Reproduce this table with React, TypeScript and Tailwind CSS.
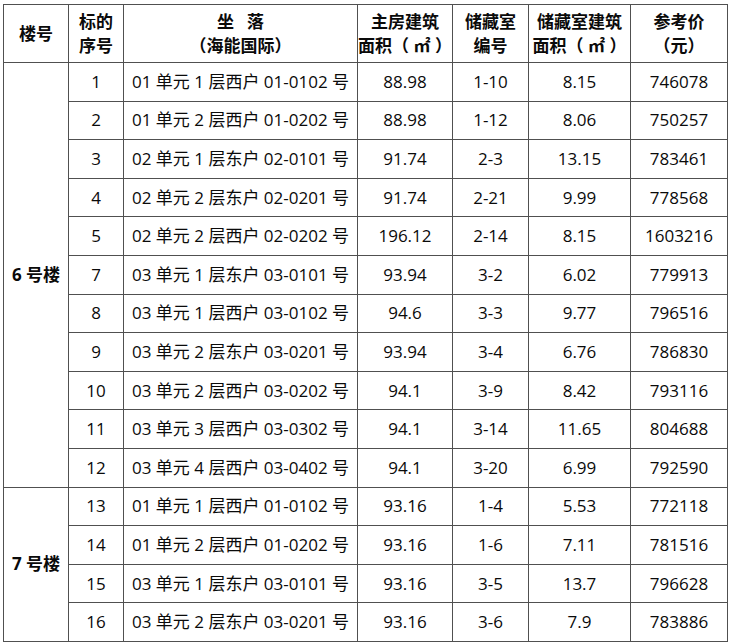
const rows6 = [
  ["1", "01 单元 1 层西户 01-0102 号", "88.98", "1-10", "8.15", "746078"],
  ["2", "01 单元 2 层西户 01-0202 号", "88.98", "1-12", "8.06", "750257"],
  ["3", "02 单元 1 层东户 02-0101 号", "91.74", "2-3", "13.15", "783461"],
  ["4", "02 单元 2 层东户 02-0201 号", "91.74", "2-21", "9.99", "778568"],
  ["5", "02 单元 2 层西户 02-0202 号", "196.12", "2-14", "8.15", "1603216"],
  ["7", "03 单元 1 层东户 03-0101 号", "93.94", "3-2", "6.02", "779913"],
  ["8", "03 单元 1 层西户 03-0102 号", "94.6", "3-3", "9.77", "796516"],
  ["9", "03 单元 2 层东户 03-0201 号", "93.94", "3-4", "6.76", "786830"],
  ["10", "03 单元 2 层西户 03-0202 号", "94.1", "3-9", "8.42", "793116"],
  ["11", "03 单元 3 层西户 03-0302 号", "94.1", "3-14", "11.65", "804688"],
  ["12", "03 单元 4 层西户 03-0402 号", "94.1", "3-20", "6.99", "792590"],
]

const rows7 = [
  ["13", "01 单元 1 层西户 01-0102 号", "93.16", "1-4", "5.53", "772118"],
  ["14", "01 单元 2 层西户 01-0202 号", "93.16", "1-6", "7.11", "781516"],
  ["15", "03 单元 1 层东户 03-0101 号", "93.16", "3-5", "13.7", "796628"],
  ["16", "03 单元 2 层东户 03-0201 号", "93.16", "3-6", "7.9", "783886"],
]

const cell = "border border-[#505050] text-center align-middle p-0"

function Group({ name, rows }: { name: string; rows: string[][] }) {
  return (
    <>
      {rows.map((r, i) => (
        <tr key={r[0]} className="h-[38.6px]">
          {i === 0 && (
            <td rowSpan={rows.length} className={`${cell} font-bold`}>
              {name}
            </td>
          )}
          <td className={cell}>{r[0]}</td>
          <td className={`${cell} text-left pl-[8px] whitespace-nowrap`}>{r[1]}</td>
          <td className={cell}>{r[2]}</td>
          <td className={cell}>{r[3]}</td>
          <td className={cell}>{r[4]}</td>
          <td className={cell}>{r[5]}</td>
        </tr>
      ))}
    </>
  )
}

export default function App() {
  return (
    <div
      className="w-[730px] h-[644px] bg-white pt-[4px] pl-[3px] text-[#0a0a0a] text-[17px] leading-[24px]"
      style={{ fontFamily: '"Open Sans", "Noto Sans CJK SC", sans-serif' }}
    >
      <table className="table-fixed border-collapse w-[724px]">
        <colgroup>
          <col className="w-[65px]" />
          <col className="w-[55px]" />
          <col className="w-[234px]" />
          <col className="w-[95px]" />
          <col className="w-[76px]" />
          <col className="w-[102px]" />
          <col className="w-[97px]" />
        </colgroup>
        <thead>
          <tr className="h-[58px] font-bold">
            <th className={cell}>楼号</th>
            <th className={cell}>
              标的
              <br />
              序号
            </th>
            <th className={cell}>
              坐&nbsp;&nbsp;&nbsp;落
              <br />
              （海能国际）
            </th>
            <th className={`${cell} whitespace-nowrap`}>
              主房建筑
              <br />
              面积（ ㎡ ）
            </th>
            <th className={cell}>
              储藏室
              <br />
              编号
            </th>
            <th className={`${cell} whitespace-nowrap`}>
              储藏室建筑
              <br />
              面积（ ㎡ ）
            </th>
            <th className={cell}>
              参考价
              <br />
              （元）
            </th>
          </tr>
        </thead>
        <tbody>
          <Group name="6 号楼" rows={rows6} />
          <Group name="7 号楼" rows={rows7} />
        </tbody>
      </table>
    </div>
  )
}
